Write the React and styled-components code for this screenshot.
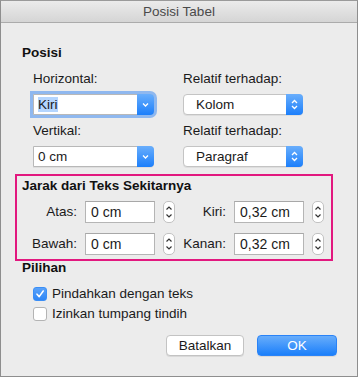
import React from "react";
import styled, { createGlobalStyle } from "styled-components";

const GlobalStyle = createGlobalStyle`
  html, body {
    margin: 0;
    padding: 0;
    background: #ececec;
  }
  body {
    font-family: "Liberation Sans", Arial, sans-serif;
    font-size: 13.5px;
    color: #1a1a1a;
  }
`;

const Window = styled.div`
  width: 358px;
  height: 377px;
  box-sizing: border-box;
  border: 1px solid #8e8e8e;
  border-top-color: #9a9a9a;
  background: #ececec;
  display: flex;
  flex-direction: column;
`;

const TitleBar = styled.div`
  height: 21px;
  flex: 0 0 21px;
  display: flex;
  align-items: center;
  justify-content: center;
  background: linear-gradient(#ebebeb, #d5d5d5);
  border-bottom: 1px solid #ababab;
  color: #4a4a4a;
  font-size: 13.5px;
`;

const Body = styled.div`
  flex: 1;
  padding: 22px 20px 0 21px;
  display: flex;
  flex-direction: column;
`;

const Heading = styled.div`
  font-weight: 700;
  line-height: 16px;
  height: 16px;
  color: #111;
`;

const FieldGrid = styled.div`
  margin: 10px 0 0 11px;
  display: grid;
  grid-template-columns: 150px 1fr;
  grid-auto-rows: auto;
`;

const Field = styled.div`
  display: flex;
  flex-direction: column;
  margin-top: ${({ $top }) => $top || 0}px;
`;

const Label = styled.div`
  line-height: 16px;
  height: 16px;
  margin-bottom: ${({ $gap }) => $gap || 7}px;
`;

const SelectBox = styled.div`
  position: relative;
  width: ${({ $width }) => $width}px;
  height: 21px;
  box-sizing: border-box;
  display: flex;
  align-items: center;
  background: #fff;
  border: 1px solid ${({ $popup }) => ($popup ? "#c4c4c4" : "#b8b8b8")};
  border-radius: ${({ $popup }) => ($popup ? "4px" : "0 4px 4px 0")};
  box-shadow: ${({ $focus }) =>
    $focus ? "0 0 0 3px #8fb8ef" : "0 1px 0 rgba(0,0,0,0.06)"};
`;

const SelectText = styled.span`
  flex: 1;
  padding-left: ${({ $popup }) => ($popup ? "12px" : "4px")};
  line-height: 16px;
  white-space: nowrap;
`;

const Highlight = styled.span`
  background: #b4d5fe;
`;

const ArrowButton = styled.div`
  width: 17px;
  align-self: stretch;
  margin: -1px -1px -1px 0;
  border-radius: 0 4px 4px 0;
  background: linear-gradient(#69aefc, #1c7ffb);
  display: flex;
  align-items: center;
  justify-content: center;
`;

const Chevron = ({ double }) =>
  double ? (
    <svg width="9" height="13" viewBox="0 0 9 13">
      <path d="M2 5 L4.5 2.5 L7 5" fill="none" stroke="#fff" strokeWidth="1.3" />
      <path d="M2 8 L4.5 10.5 L7 8" fill="none" stroke="#fff" strokeWidth="1.3" />
    </svg>
  ) : (
    <svg width="9" height="7" viewBox="0 0 9 7">
      <path d="M2 2.5 L4.5 5 L7 2.5" fill="none" stroke="#fff" strokeWidth="1.3" />
    </svg>
  );

const Select = ({ width, popup, focus, children }) => (
  <SelectBox $width={width} $popup={popup} $focus={focus}>
    <SelectText $popup={popup}>{children}</SelectText>
    <ArrowButton>
      <Chevron double={popup} />
    </ArrowButton>
  </SelectBox>
);

const DistanceBox = styled.div`
  margin: 7px 4px 0 -7px;
  height: 87px;
  box-sizing: border-box;
  border: 2px solid #e2187f;
  padding: 2px 0 0 5px;
`;

const DistanceGrid = styled.div`
  margin-top: 7px;
  display: grid;
  grid-template-columns: 55px 70px 12px 43px 70px 12px;
  column-gap: 8px;
  row-gap: 10px;
  align-items: center;
`;

const RowLabel = styled.div`
  text-align: right;
  line-height: 16px;
`;

const TextInput = styled.div`
  height: 22px;
  box-sizing: border-box;
  background: #fff;
  border: 1px solid #b5b5b5;
  border-top-color: #a8a8a8;
  padding: 0 5px;
  display: flex;
  align-items: center;
  font-size: 14px;
`;

const StepperBox = styled.div`
  width: 12px;
  height: 22px;
  box-sizing: border-box;
  background: #fff;
  border: 1px solid #c2c2c2;
  border-radius: 5px;
  display: flex;
  align-items: center;
  justify-content: center;
`;

const Stepper = () => (
  <StepperBox>
    <svg width="8" height="16" viewBox="0 0 8 16">
      <path d="M1.5 5.5 L4 3 L6.5 5.5" fill="none" stroke="#333" strokeWidth="1.2" />
      <path d="M1.5 10.5 L4 13 L6.5 10.5" fill="none" stroke="#333" strokeWidth="1.2" />
    </svg>
  </StepperBox>
);

const OptionsHeading = styled(Heading)`
  margin-top: -1px;
`;

const CheckList = styled.div`
  margin: 10px 0 0 11px;
  display: flex;
  flex-direction: column;
  gap: 5px;
`;

const CheckRow = styled.label`
  display: flex;
  align-items: center;
  gap: 5px;
  line-height: 15px;
`;

const CheckBox = styled.span`
  width: 14px;
  height: 14px;
  box-sizing: border-box;
  border-radius: 3px;
  border: 1px solid ${({ $checked }) => ($checked ? "#3a8ef6" : "#b4b4b4")};
  background: ${({ $checked }) =>
    $checked ? "linear-gradient(#5aa2f9, #2e86f6)" : "#fff"};
  display: flex;
  align-items: center;
  justify-content: center;
`;

const Check = ({ checked, children }) => (
  <CheckRow>
    <CheckBox $checked={checked}>
      {checked && (
        <svg width="10" height="10" viewBox="0 0 10 10">
          <path
            d="M2 5.2 L4.2 7.6 L8.2 2"
            fill="none"
            stroke="#fff"
            strokeWidth="1.6"
            strokeLinecap="round"
            strokeLinejoin="round"
          />
        </svg>
      )}
    </CheckBox>
    {children}
  </CheckRow>
);

const ButtonRow = styled.div`
  margin-top: 14px;
  display: flex;
  justify-content: flex-end;
  gap: 13px;
`;

const Button = styled.button`
  width: ${({ $width }) => $width}px;
  height: 21px;
  box-sizing: border-box;
  border-radius: 4px;
  font-family: inherit;
  font-size: 13.5px;
  padding: 0;
  border: 1px solid ${({ $primary }) => ($primary ? "#2a83f7" : "#c3c3c3")};
  background: ${({ $primary }) =>
    $primary ? "linear-gradient(#68adfb, #1b7ffa)" : "#fff"};
  color: ${({ $primary }) => ($primary ? "#fff" : "#1a1a1a")};
  box-shadow: 0 1px 0 rgba(0, 0, 0, 0.08);
`;

export default function App() {
  return (
    <>
      <GlobalStyle />
      <Window>
        <TitleBar>Posisi Tabel</TitleBar>
        <Body>
          <Heading>Posisi</Heading>
          <FieldGrid>
            <Field>
              <Label>Horizontal:</Label>
              <Select width={121} focus>
                <Highlight>Kiri</Highlight>
              </Select>
            </Field>
            <Field>
              <Label>Relatif terhadap:</Label>
              <Select width={120} popup>
                Kolom
              </Select>
            </Field>
            <Field $top={8}>
              <Label $gap={7}>Vertikal:</Label>
              <Select width={121}>0 cm</Select>
            </Field>
            <Field $top={8}>
              <Label $gap={7}>Relatif terhadap:</Label>
              <Select width={120} popup>
                Paragraf
              </Select>
            </Field>
          </FieldGrid>
          <DistanceBox>
            <Heading>Jarak dari Teks Sekitarnya</Heading>
            <DistanceGrid>
              <RowLabel>Atas:</RowLabel>
              <TextInput>0 cm</TextInput>
              <Stepper />
              <RowLabel>Kiri:</RowLabel>
              <TextInput>0,32 cm</TextInput>
              <Stepper />
              <RowLabel>Bawah:</RowLabel>
              <TextInput>0 cm</TextInput>
              <Stepper />
              <RowLabel>Kanan:</RowLabel>
              <TextInput>0,32 cm</TextInput>
              <Stepper />
            </DistanceGrid>
          </DistanceBox>
          <OptionsHeading>Pilihan</OptionsHeading>
          <CheckList>
            <Check checked>Pindahkan dengan teks</Check>
            <Check>Izinkan tumpang tindih</Check>
          </CheckList>
          <ButtonRow>
            <Button $width={78}>Batalkan</Button>
            <Button $width={80} $primary>
              OK
            </Button>
          </ButtonRow>
        </Body>
      </Window>
    </>
  );
}
